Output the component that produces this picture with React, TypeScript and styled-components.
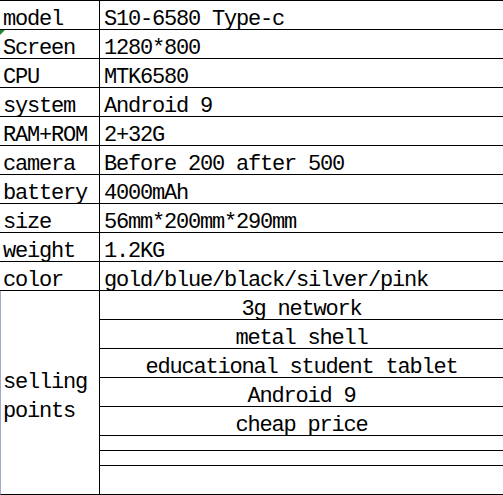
import styled, { createGlobalStyle } from 'styled-components'

const GlobalStyle = createGlobalStyle`
  html, body {
    margin: 0;
    padding: 0;
    background: #fff;
  }
  body {
    font-family: "Liberation Mono", "Noto Sans CJK SC", monospace;
    color: #000;
  }
`

const Sheet = styled.div`
  width: 503px;
  border-top: 1px solid #000;
  display: grid;
  grid-template-columns: 100px 1fr;
`

const Label = styled.div`
  position: relative;
  height: 20px;
  padding: 8px 0 0 3px;
  border-bottom: 1px solid #000;
  border-right: 1px solid #000;
  font-size: 22px;
  line-height: 21px;
  letter-spacing: -1.2px;
  white-space: nowrap;
`

const Value = styled.div`
  height: 20px;
  padding: 8px 0 0 4px;
  border-bottom: 1px solid #000;
  font-size: 22px;
  line-height: 21px;
  letter-spacing: -1.2px;
  white-space: nowrap;
`

// little green comment flag in the corner of a cell
const Marker = styled.span`
  position: absolute;
  top: 0;
  left: 0;
  width: 0;
  height: 0;
  border-top: 5px solid #1e8a2e;
  border-right: 5px solid transparent;
`

const GroupLabel = styled.div`
  border-left: 1px solid #9facc4;
  border-right: 1px solid #000;
  border-bottom: 1px solid #000;
  padding: 9px 0 0 2px;
  display: flex;
  align-items: center;
  font-size: 22px;
  line-height: 29px;
  letter-spacing: -1.2px;
`

const Points = styled.div`
  display: flex;
  flex-direction: column;
`

const Point = styled.div<{ short?: boolean }>`
  height: ${p => (p.short ? '14px' : '20px')};
  padding-top: ${p => (p.short ? '0' : '8px')};
  border-bottom: 1px solid #000;
  text-align: center;
  font-size: 22px;
  line-height: 21px;
  letter-spacing: -1.2px;
  white-space: nowrap;
`

const specs: [string, string][] = [
  ['model', 'S10-6580 Type-c'],
  ['Screen', '1280*800'],
  ['CPU', 'MTK6580'],
  ['system', 'Android 9'],
  ['RAM+ROM', '2+32G'],
  ['camera', 'Before 200 after 500'],
  ['battery', '4000mAh'],
  ['size', '56mm*200mm*290mm'],
  ['weight', '1.2KG'],
  ['color', 'gold/blue/black/silver/pink'],
]

const sellingPoints: { text: string; short?: boolean }[] = [
  { text: '3g network' },
  { text: 'metal shell' },
  { text: 'educational student tablet' },
  { text: 'Android 9' },
  { text: 'cheap price' },
  { text: '', short: true },
  { text: '', short: true },
  { text: '' },
]

export default function App(): JSX.Element {
  return (
    <>
      <GlobalStyle />
      <Sheet>
        {specs.flatMap(([name, value]) => [
          <Label key={name}>
            {name === 'Screen' && <Marker />}
            {name}
          </Label>,
          <Value key={name + '-v'}>{value}</Value>,
        ])}
        <GroupLabel>selling points</GroupLabel>
        <Points>
          {sellingPoints.map((p, i) => (
            <Point key={i} short={p.short}>{p.text}</Point>
          ))}
        </Points>
      </Sheet>
    </>
  )
}
